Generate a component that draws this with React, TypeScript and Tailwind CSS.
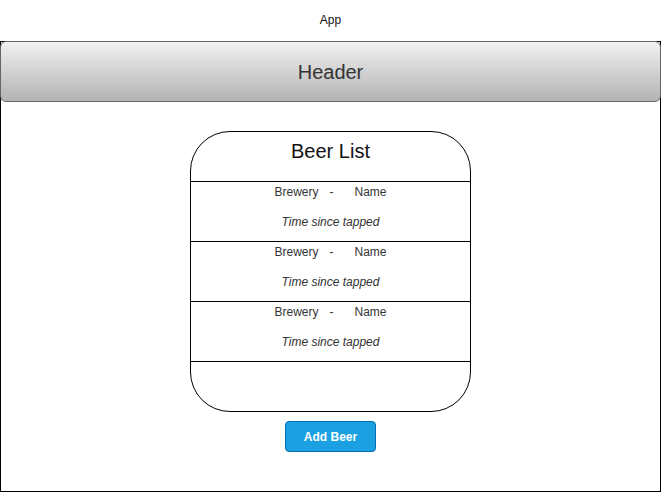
const beers = [
  { brewery: "Brewery", name: "Name", tapped: "Time since tapped" },
  { brewery: "Brewery", name: "Name", tapped: "Time since tapped" },
  { brewery: "Brewery", name: "Name", tapped: "Time since tapped" },
];

function BeerRow({ brewery, name, tapped }: { brewery: string; name: string; tapped: string }) {
  return (
    <div className="h-[60px] border-b border-black pt-[3px] flex flex-col items-center">
      <p className="text-[12px] leading-[14px] text-[#333]">
        <span>{brewery}</span>
        <span className="ml-[11px] mr-[21px]">-</span>
        <span>{name}</span>
      </p>
      <p className="mt-[16px] text-[12px] leading-[14px] italic text-[#333]">{tapped}</p>
    </div>
  );
}

export default function App() {
  return (
    <div className="w-[661px] h-[492px] bg-white font-['Liberation_Sans',Arial,sans-serif]">
      <div className="h-[41px] pt-[13px] text-center text-[12px] leading-[14px] text-[#111]">App</div>
      <div className="h-[451px] border border-black flex flex-col items-center">
        <header className="-mx-px -mt-px w-[661px] h-[61px] rounded-[6px] border border-[#666] bg-linear-to-b from-[#f2f2f2] to-[#b3b3b3] flex items-center justify-center">
          <h1 className="text-[20px] leading-[24px] text-[#333]">Header</h1>
        </header>

        <section className="mt-[29px] w-[281px] h-[281px] rounded-[40px] border border-black flex flex-col">
          <div className="h-[50px] border-b border-black pt-[7px] text-center">
            <h2 className="text-[20px] leading-[24px] text-[#111]">Beer List</h2>
          </div>
          {beers.map((b, i) => (
            <BeerRow key={i} {...b} />
          ))}
        </section>

        <button className="mt-[9px] w-[91px] h-[31px] rounded-[4px] border border-[#006eaf] bg-[#1ba1e2] text-white text-[12px] font-bold">
          Add Beer
        </button>
      </div>
    </div>
  );
}
